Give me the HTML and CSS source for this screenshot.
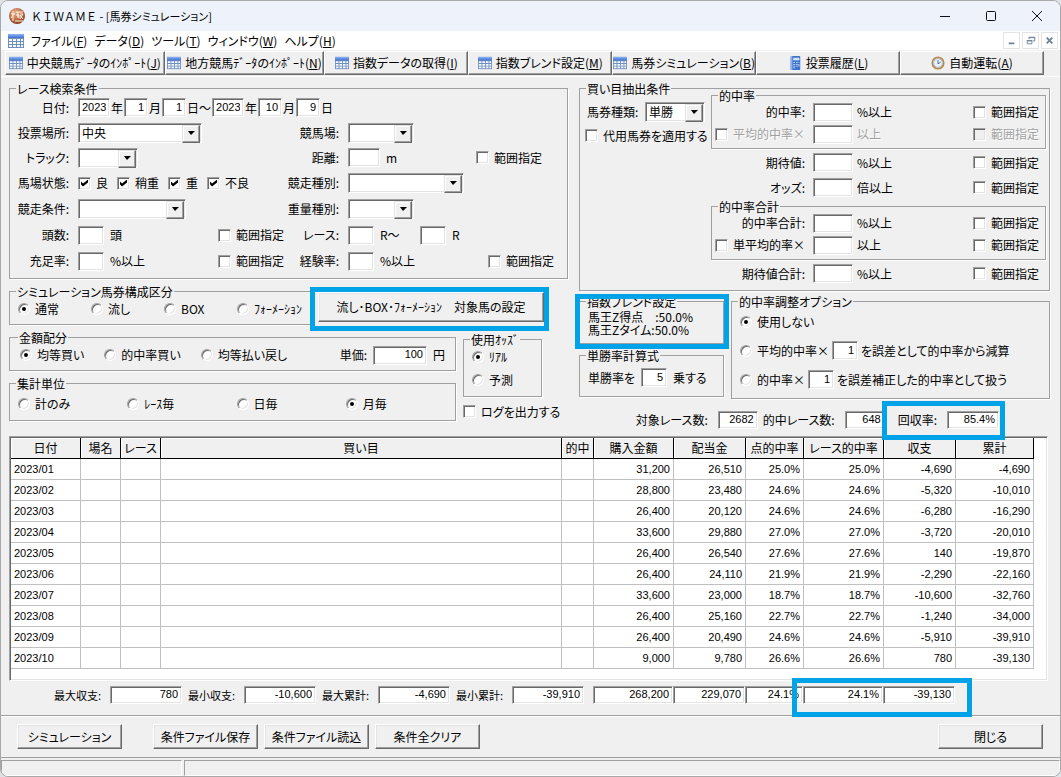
FILE: index.html
```html
<!DOCTYPE html>
<html lang="ja">
<head>
    <meta charset="UTF-8">
    <meta name="viewport" content="width=device-width, initial-scale=1.0">
    <title>KIWAME - [馬券シミュレーション]</title>
    <link rel="stylesheet" href="styles.css">
</head>
<body>
<svg class="defs" width="0" height="0" aria-hidden="true">
    <linearGradient id="gridHead" x1="0" y1="0" x2="0" y2="1">
        <stop offset="0" stop-color="#8fb4f4"/>
        <stop offset="1" stop-color="#3f6fd0"/>
    </linearGradient>
    <symbol id="icon-grid" viewBox="0 0 16 16">
        <rect x="0" y="1" width="16" height="14" fill="#6f8fc0"/>
        <rect x="0" y="1" width="16" height="4" fill="url(#gridHead)"/>
        <path fill="#f4f8ff" d="M1 6h3v2H1zM5 6h3v2H5zM9 6h3v2H9zM13 6h2v2h-2zM1 9h3v2H1zM5 9h3v2H5zM9 9h3v2H9zM13 9h2v2h-2zM1 12h3v2H1zM5 12h3v2H5zM9 12h3v2H9zM13 12h2v2h-2z"/>
    </symbol>
</svg>
<div class="window">
    <header class="titlebar">
        <svg class="app-icon" viewBox="0 0 16 16">
            <radialGradient id="ball" cx=".4" cy=".3" r=".8">
                <stop offset="0" stop-color="#e9b08a"/>
                <stop offset=".6" stop-color="#b5653a"/>
                <stop offset="1" stop-color="#6d3014"/>
            </radialGradient>
            <circle cx="8" cy="8" r="8" fill="url(#ball)"/>
            <path fill="none" stroke="#fff3e8" stroke-width="1" d="M2 6h4M4 3v10M4 7l-2 3M7 4h7M9 4v6M7 7h3v3M11 6h3l-3 5M11 7l3 4M6 13h8"/>
        </svg>
        <h1><span class="wide">ＫＩＷＡＭＥ</span> - [馬券シミュレーション]</h1>
        <div class="win-buttons">
            <button aria-label="最小化"><svg viewBox="0 0 12 12"><path d="M1 6.5h10"/></svg></button>
            <button aria-label="最大化"><svg viewBox="0 0 12 12"><rect x="1.5" y="1.5" width="9" height="9" rx="1"/></svg></button>
            <button aria-label="終了"><svg viewBox="0 0 12 12"><path d="M1 1l10 10M11 1L1 11"/></svg></button>
        </div>
    </header>

    <nav class="menubar">
        <svg class="menu-icon"><use href="#icon-grid"/></svg>
        <a href="#">ファイル(<u>F</u>)</a>
        <a href="#">データ(<u>D</u>)</a>
        <a href="#">ツール(<u>T</u>)</a>
        <a href="#">ウィンドウ(<u>W</u>)</a>
        <a href="#">ヘルプ(<u>H</u>)</a>
        <div class="mdi-buttons">
            <button aria-label="子画面を最小化"><svg viewBox="0 0 16 16"><path d="M5 11h6" stroke-width="2"/></svg></button>
            <button aria-label="子画面を元に戻す"><svg viewBox="0 0 16 16"><path d="M6.5 6.5v-2h6v4h-2M6 5h7M4.5 8.500h5v3h-5zM4 8h6"/></svg></button>
            <button aria-label="子画面を閉じる"><svg viewBox="0 0 16 16"><path d="M5 5l6 6M11 5l-6 6" stroke-width="2"/></svg></button>
        </div>
    </nav>

    <div class="toolbar">
        <button class="long"><svg><use href="#icon-grid"/></svg><span>中央競馬ﾃﾞｰﾀのｲﾝﾎﾟｰﾄ(<u>J</u>)</span></button>
        <button class="long"><svg><use href="#icon-grid"/></svg><span>地方競馬ﾃﾞｰﾀのｲﾝﾎﾟｰﾄ(<u>N</u>)</span></button>
        <button><svg><use href="#icon-grid"/></svg><span>指数データの取得(<u>I</u>)</span></button>
        <button><svg><use href="#icon-grid"/></svg><span>指数ブレンド設定(<u>M</u>)</span></button>
        <button><svg><use href="#icon-grid"/></svg><span>馬券シミュレーション(<u>B</u>)</span></button>
        <button>
            <svg viewBox="0 0 16 16">
                <rect x="3" y="0" width="11" height="16" rx="1" fill="#3d74c9"/>
                <rect x="3" y="0" width="2" height="16" fill="#8db4ea"/>
                <rect x="6" y="2" width="7" height="3" fill="#cfe3fb"/>
                <path fill="#dbe9fb" d="M6 7h2v1H6zM9 7h2v1H9zM6 9h2v1H6zM9 9h2v1H9zM6 11h2v1H6zM9 11h2v1H9zM12 7h1v1h-1zM12 9h1v3h-1zM6 13h2v1H6z"/>
            </svg>
            <span>投票履歴(<u>L</u>)</span>
        </button>
        <button>
            <svg viewBox="0 0 16 16">
                <circle cx="8" cy="8" r="6.500" fill="#e9f2fc" stroke="#b98a4a" stroke-width="2"/>
                <circle cx="8" cy="8" r="5" fill="none" stroke="#9fb6d4"/>
                <path d="M8 4.500V9l3-2" fill="none" stroke="#3c5f94"/>
            </svg>
            <span>自動運転(<u>A</u>)</span>
        </button>
    </div>

    <main>
        <div class="conditions">
            <div class="left">
                <fieldset class="search">
                    <legend>レース検索条件</legend>
                    <label for="fromYear">日付:</label>
                    <div class="cell dates">
                        <input type="text" id="fromYear" class="w32" value="2023">年
                        <input type="text" class="w24" value="1" aria-label="開始月">月
                        <input type="text" class="w24" value="1" aria-label="開始日">日～
                        <input type="text" class="w32" value="2023" aria-label="終了年">年
                        <input type="text" class="w24" value="10" aria-label="終了月">月
                        <input type="text" class="w24" value="9" aria-label="終了日">日
                    </div>

                    <label for="place">投票場所:</label>
                    <div class="cell"><span class="combo w124"><select id="place"><option>中央</option></select></span></div>
                    <label for="course">競馬場:</label>
                    <div class="cell"><span class="combo w66"><select id="course"><option></option></select></span></div>

                    <label for="track">トラック:</label>
                    <div class="cell"><span class="combo w60"><select id="track"><option></option></select></span></div>
                    <label for="distance">距離:</label>
                    <div class="cell">
                        <input type="text" id="distance" class="w32"><span class="unit">m</span>
                        <label class="check range inner"><input type="checkbox">範囲指定</label>
                    </div>

                    <span class="caption">馬場状態:</span>
                    <div class="cell going">
                        <label class="check"><input type="checkbox" checked>良</label>
                        <label class="check"><input type="checkbox" checked>稍重</label>
                        <label class="check"><input type="checkbox" checked>重</label>
                        <label class="check"><input type="checkbox" checked>不良</label>
                    </div>
                    <label for="raceType">競走種別:</label>
                    <div class="cell"><span class="combo w116"><select id="raceType"><option></option></select></span></div>

                    <label for="raceCond">競走条件:</label>
                    <div class="cell"><span class="combo w108"><select id="raceCond"><option></option></select></span></div>
                    <label for="weightType">重量種別:</label>
                    <div class="cell"><span class="combo w66"><select id="weightType"><option></option></select></span></div>

                    <label for="heads">頭数:</label>
                    <div class="cell">
                        <input type="text" id="heads" class="w26"><span class="unit">頭</span>
                        <label class="check range"><input type="checkbox">範囲指定</label>
                    </div>
                    <label for="raceFrom">レース:</label>
                    <div class="cell">
                        <input type="text" id="raceFrom" class="w26"><span class="unit to">R～</span>
                        <input type="text" class="w26" aria-label="レース終了"><span class="unit">R</span>
                    </div>

                    <label for="fill">充足率:</label>
                    <div class="cell">
                        <input type="text" id="fill" class="w26"><span class="unit">%以上</span>
                        <label class="check range"><input type="checkbox">範囲指定</label>
                    </div>
                    <label for="exp">経験率:</label>
                    <div class="cell">
                        <input type="text" id="exp" class="w26"><span class="unit">%以上</span>
                        <label class="check range"><input type="checkbox">範囲指定</label>
                    </div>
                </fieldset>

                <div class="kind-row">
                    <fieldset class="kind">
                        <legend>シミュレーション馬券構成区分</legend>
                        <label class="radio"><input type="radio" name="kind" checked>通常</label>
                        <label class="radio"><input type="radio" name="kind">流し</label>
                        <label class="radio"><input type="radio" name="kind">BOX</label>
                        <label class="radio"><input type="radio" name="kind">ﾌｫｰﾒｰｼｮﾝ</label>
                    </fieldset>
                    <div class="marked mark-target">
                        <button class="btn">流し･BOX･ﾌｫｰﾒｰｼｮﾝ　対象馬の設定</button>
                    </div>
                </div>

                <div class="money-row">
                    <div class="money-left">
                        <fieldset class="money">
                            <legend>金額配分</legend>
                            <label class="radio"><input type="radio" name="alloc" checked>均等買い</label>
                            <label class="radio"><input type="radio" name="alloc">的中率買い</label>
                            <label class="radio"><input type="radio" name="alloc">均等払い戻し</label>
                            <label for="unitPrice" class="price">単価:</label>
                            <input type="text" id="unitPrice" class="w54" value="100">
                            <span>円</span>
                        </fieldset>
                        <fieldset class="total-unit">
                            <legend>集計単位</legend>
                            <label class="radio"><input type="radio" name="unit">計のみ</label>
                            <label class="radio"><input type="radio" name="unit">ﾚｰｽ毎</label>
                            <label class="radio"><input type="radio" name="unit">日毎</label>
                            <label class="radio"><input type="radio" name="unit" checked>月毎</label>
                        </fieldset>
                    </div>
                    <div class="money-right">
                        <fieldset class="odds">
                            <legend>使用ｵｯｽﾞ</legend>
                            <label class="radio"><input type="radio" name="odds" checked>ﾘｱﾙ</label>
                            <label class="radio"><input type="radio" name="odds">予測</label>
                        </fieldset>
                        <label class="check log"><input type="checkbox">ログを出力する</label>
                    </div>
                </div>
            </div>

            <div class="right">
                <fieldset class="extract">
                    <legend>買い目抽出条件</legend>
                    <div class="ticket">
                        <div class="ticket-type">
                            <label for="ticket">馬券種類:</label>
                            <span class="combo w60"><select id="ticket"><option>単勝</option></select></span>
                        </div>
                        <label class="check"><input type="checkbox">代用馬券を適用する</label>
                    </div>
                    <div class="limits">
                        <fieldset class="limit-group">
                            <legend>的中率</legend>
                            <div class="limit">
                                <label for="hit">的中率:</label><input type="text" id="hit"><span>%以上</span>
                                <label class="check"><input type="checkbox">範囲指定</label>
                            </div>
                            <div class="limit off">
                                <label class="check"><input type="checkbox">平均的中率×</label><input type="text" aria-label="平均的中率"><span>以上</span>
                                <label class="check"><input type="checkbox" disabled>範囲指定</label>
                            </div>
                        </fieldset>
                        <div class="limit-plain">
                            <div class="limit">
                                <label for="expect">期待値:</label><input type="text" id="expect"><span>%以上</span>
                                <label class="check"><input type="checkbox">範囲指定</label>
                            </div>
                            <div class="limit">
                                <label for="oddsMin">オッズ:</label><input type="text" id="oddsMin"><span>倍以上</span>
                                <label class="check"><input type="checkbox">範囲指定</label>
                            </div>
                        </div>
                        <fieldset class="limit-group">
                            <legend>的中率合計</legend>
                            <div class="limit">
                                <label for="hitSum">的中率合計:</label><input type="text" id="hitSum"><span>%以上</span>
                                <label class="check"><input type="checkbox">範囲指定</label>
                            </div>
                            <div class="limit">
                                <label class="check"><input type="checkbox">単平均的率×</label><input type="text" aria-label="単平均的率"><span>以上</span>
                                <label class="check"><input type="checkbox">範囲指定</label>
                            </div>
                        </fieldset>
                        <div class="limit-plain">
                            <div class="limit">
                                <label for="expectSum">期待値合計:</label><input type="text" id="expectSum"><span>%以上</span>
                                <label class="check"><input type="checkbox">範囲指定</label>
                            </div>
                        </div>
                    </div>
                </fieldset>

                <div class="option-row">
                    <div class="option-left">
                        <div class="marked mark-blend">
                            <fieldset class="blend">
                                <legend>指数ブレンド設定</legend>
                                <p>馬王Z得点　:50.0%</p>
                                <p>馬王Zタイム:50.0%</p>
                            </fieldset>
                        </div>
                        <fieldset class="power">
                            <legend>単勝率計算式</legend>
                            <label for="power">単勝率を</label>
                            <input type="text" id="power" class="w26" value="5">
                            <span>乗する</span>
                        </fieldset>
                    </div>
                    <fieldset class="adjust">
                        <legend>的中率調整オプション</legend>
                        <div><label class="radio"><input type="radio" name="adj" checked>使用しない</label></div>
                        <div><label class="radio"><input type="radio" name="adj">平均的中率×</label><input type="text" class="w26" value="1" aria-label="誤差">を誤差として的中率から減算</div>
                        <div><label class="radio"><input type="radio" name="adj">的中率×</label><input type="text" class="w26" value="1" aria-label="誤差補正">を誤差補正した的中率として扱う</div>
                    </fieldset>
                </div>

                <div class="counts">
                    <label for="races">対象レース数:</label><input type="text" id="races" class="w40" value="2682" readonly>
                    <label for="hits" class="hits">的中レース数:</label><input type="text" id="hits" class="w40" value="648" readonly>
                    <div class="marked mark-rate">
                        <label for="rate">回収率:</label><input type="text" id="rate" class="w52" value="85.4%" readonly>
                    </div>
                </div>
            </div>
        </div>

        <div class="grid-box">
            <table>
                <colgroup>
                    <col class="c70"><col class="c40"><col class="c40"><col><col class="c32">
                    <col class="c80"><col class="c72"><col class="c58"><col class="c80"><col class="c72"><col class="c78">
                </colgroup>
                <thead>
                    <tr><th>日付</th><th>場名</th><th>レース</th><th>買い目</th><th>的中</th><th>購入金額</th><th>配当金</th><th>点的中率</th><th>レース的中率</th><th>収支</th><th>累計</th></tr>
                </thead>
                <tbody>
                    <tr><td>2023/01</td><td></td><td></td><td></td><td></td><td>31,200</td><td>26,510</td><td>25.0%</td><td>25.0%</td><td>-4,690</td><td>-4,690</td></tr>
                    <tr><td>2023/02</td><td></td><td></td><td></td><td></td><td>28,800</td><td>23,480</td><td>24.6%</td><td>24.6%</td><td>-5,320</td><td>-10,010</td></tr>
                    <tr><td>2023/03</td><td></td><td></td><td></td><td></td><td>26,400</td><td>20,120</td><td>24.6%</td><td>24.6%</td><td>-6,280</td><td>-16,290</td></tr>
                    <tr><td>2023/04</td><td></td><td></td><td></td><td></td><td>33,600</td><td>29,880</td><td>27.0%</td><td>27.0%</td><td>-3,720</td><td>-20,010</td></tr>
                    <tr><td>2023/05</td><td></td><td></td><td></td><td></td><td>26,400</td><td>26,540</td><td>27.6%</td><td>27.6%</td><td>140</td><td>-19,870</td></tr>
                    <tr><td>2023/06</td><td></td><td></td><td></td><td></td><td>26,400</td><td>24,110</td><td>21.9%</td><td>21.9%</td><td>-2,290</td><td>-22,160</td></tr>
                    <tr><td>2023/07</td><td></td><td></td><td></td><td></td><td>33,600</td><td>23,000</td><td>18.7%</td><td>18.7%</td><td>-10,600</td><td>-32,760</td></tr>
                    <tr><td>2023/08</td><td></td><td></td><td></td><td></td><td>26,400</td><td>25,160</td><td>22.7%</td><td>22.7%</td><td>-1,240</td><td>-34,000</td></tr>
                    <tr><td>2023/09</td><td></td><td></td><td></td><td></td><td>26,400</td><td>20,490</td><td>24.6%</td><td>24.6%</td><td>-5,910</td><td>-39,910</td></tr>
                    <tr><td>2023/10</td><td></td><td></td><td></td><td></td><td>9,000</td><td>9,780</td><td>26.6%</td><td>26.6%</td><td>780</td><td>-39,130</td></tr>
                </tbody>
            </table>
        </div>

        <div class="summary">
            <div class="extremes">
                <label for="maxBal">最大収支:</label><input type="text" id="maxBal" value="780" readonly>
                <label for="minBal">最小収支:</label><input type="text" id="minBal" value="-10,600" readonly>
                <label for="maxSum">最大累計:</label><input type="text" id="maxSum" value="-4,690" readonly>
                <label for="minSum">最小累計:</label><input type="text" id="minSum" value="-39,910" readonly>
            </div>
            <div class="totals">
                <input type="text" class="c80" value="268,200" aria-label="購入金額合計" readonly>
                <input type="text" class="c72" value="229,070" aria-label="配当金合計" readonly>
                <input type="text" class="c58" value="24.1%" aria-label="点的中率" readonly>
                <div class="marked mark-total">
                    <input type="text" class="c80" value="24.1%" aria-label="レース的中率" readonly>
                    <input type="text" class="c72" value="-39,130" aria-label="収支合計" readonly>
                </div>
            </div>
        </div>
    </main>

    <div class="actions">
        <button class="btn first">シミュレーション</button>
        <button class="btn">条件ファイル保存</button>
        <button class="btn">条件ファイル読込</button>
        <button class="btn">条件全クリア</button>
        <button class="btn close">閉じる</button>
    </div>
    <footer class="statusbar"><div class="pane-small"></div><div class="pane"></div></footer>
</div>
</body>
</html>
```
FILE: styles.css
```css
* {
    box-sizing: border-box;
}
body {
    margin: 0;
    background: #dfe3e8;
    color: #000;
    font: 12px/12px "Noto Sans CJK JP", sans-serif;
    font-feature-settings: "palt";
}
button, input, select {
    margin: 0;
    padding: 0;
    border-radius: 0;
    font: inherit;
    font-feature-settings: inherit;
    color: inherit;
}
p {
    margin: 0;
}
.defs {
    position: absolute;
}
.window {
    display: flex;
    flex-direction: column;
    min-width: 1061px;
    min-height: 100vh;
    background: #f0f0f0;
    border: 1px solid #a8a8a8;
    border-radius: 8px;
    overflow: hidden;
}

/* title bar */
.titlebar {
    display: flex;
    align-items: center;
    height: 30px;
    padding: 0 8px;
    background: #eef3fb;
}
.app-icon {
    width: 16px;
    height: 16px;
    margin-right: 6px;
}
.titlebar h1 {
    margin: 0;
    font-size: 11px;
    font-weight: normal;
}
.wide {
    font-feature-settings: normal;
}
.win-buttons {
    display: flex;
    gap: 34px;
    margin-left: auto;
    padding-right: 9px;
}
.win-buttons button {
    width: 12px;
    height: 12px;
    border: 0;
    background: none;
}
.win-buttons svg {
    display: block;
    fill: none;
    stroke: #111;
}

/* menu */
.menubar {
    display: flex;
    align-items: center;
    gap: 7px;
    height: 19px;
    padding: 0 2px 0 7px;
    background: #fff;
}
.menubar a {
    color: #000;
    text-decoration: none;
}
.menu-icon {
    width: 16px;
    height: 16px;
}
.mdi-buttons {
    display: flex;
    gap: 2px;
    margin-left: auto;
}
.mdi-buttons button {
    width: 17px;
    height: 17px;
    background: #fff;
    border: 1px solid #e4e4e4;
}
.mdi-buttons svg {
    display: block;
    fill: none;
    stroke: #6f8296;
}

/* toolbar */
.toolbar {
    display: flex;
    height: 27px;
    padding: 1px 16px 1px 4px;
    border-bottom: 1px solid #fff;
}
.toolbar button {
    flex: 144 1 0;
    display: flex;
    align-items: center;
    justify-content: center;
    gap: 4px;
    min-width: 0;
    white-space: nowrap;
    background: #f0f0f0;
    border: 1px solid;
    border-color: #fff #696969 #696969 #fff;
    box-shadow: inset -1px -1px 0 #a0a0a0;
}
.toolbar .long {
    flex-grow: 160;
}
.toolbar svg {
    flex: none;
    width: 14px;
    height: 14px;
}

/* common parts */
fieldset {
    min-width: 0;
    margin: 0;
    padding: 0;
    border: 1px solid #a0a0a0;
    box-shadow: 1px 1px 0 #fff;
}
legend {
    margin-left: 6px;
    padding: 0 1px;
    line-height: 11px;
    white-space: nowrap;
}
label, span, .cell {
    white-space: nowrap;
}
input[type="text"] {
    flex: none;
    height: 19px;
    padding: 0 3px 2px;
    font: 11px "Liberation Sans", sans-serif;
    text-align: right;
    background: #fff;
}
input[type="text"], select, .grid-box {
    border: 1px solid;
    border-color: #a0a0a0 #fff #fff #a0a0a0;
    box-shadow: inset 1px 1px 0 #696969, inset -1px -1px 0 #e3e3e3;
    outline: none;
}
.combo {
    position: relative;
    display: block;
}
.combo select {
    display: block;
    width: 100%;
    height: 20px;
    padding-left: 3px;
    appearance: none;
    background: #fff;
}
.combo::after {
    content: "";
    position: absolute;
    top: 2px;
    right: 2px;
    width: 16px;
    height: 16px;
    background: #f0f0f0;
    border: 1px solid;
    border-color: #e3e3e3 #696969 #696969 #e3e3e3;
    box-shadow: inset -1px -1px 0 #a0a0a0, inset 1px 1px 0 #fff;
    pointer-events: none;
}
.combo::before {
    content: "";
    position: absolute;
    z-index: 1;
    top: 8px;
    right: 7px;
    border: 4px solid transparent;
    border-top-color: #000;
    border-bottom: 0;
    border-width: 4px 4px 0 3px;
    pointer-events: none;
}
.check, .radio {
    display: flex;
    align-items: center;
    gap: 5px;
}
.check input, .radio input {
    flex: none;
    display: grid;
    place-items: center;
    width: 13px;
    height: 13px;
    appearance: none;
    background: #fff;
    border: 1px solid;
    border-color: #a0a0a0 #fff #fff #a0a0a0;
    box-shadow: inset 1px 1px 0 #696969, inset -1px -1px 0 #e3e3e3;
}
.check input:disabled {
    background: #f0f0f0;
}
.check input:checked::before {
    content: "";
    width: 7px;
    height: 7px;
    background: #000;
    clip-path: polygon(0 29%, 29% 57%, 100% 0, 100% 43%, 29% 100%, 0 71%);
}
.radio input {
    width: 12px;
    height: 12px;
    border-radius: 50%;
}
.radio input:checked::before {
    content: "";
    width: 4px;
    height: 4px;
    border-radius: 50%;
    background: #000;
}
.btn {
    height: 25px;
    background: #f0f0f0;
    border: 1px solid;
    border-color: #fff #696969 #696969 #fff;
    box-shadow: inset -1px -1px 0 #a0a0a0, inset 1px 1px 0 #e3e3e3;
    white-space: nowrap;
}
.marked {
    position: relative;
}
.marked::after {
    content: "";
    position: absolute;
    border: 5px solid #00a2e8;
    pointer-events: none;
}
.w24 { width: 24px; }
.w26 { width: 26px; }
.w32 { width: 32px; }
.w40 { width: 40px; }
.w52 { width: 52px; }
.w54 { width: 54px; }
.w60 { width: 60px; }
.w66 { width: 66px; }
.w108 { width: 108px; }
.w116 { width: 116px; }
.w124 { width: 124px; }
.c32 { width: 32px; }
.c40 { width: 40px; }
.c58 { width: 58px; }
.c70 { width: 70px; }
.c72 { width: 72px; }
.c78 { width: 78px; }
.c80 { width: 80px; }

/* conditions */
main {
    padding: 6px 10px 0 8px;
}
.conditions {
    display: grid;
    grid-template-columns: 559fr 471fr;
    gap: 11px;
}
.search {
    display: grid;
    grid-template-columns: 68px 206px 64px 1fr;
    grid-template-rows: repeat(3, 25px) repeat(4, 26px);
    align-items: center;
    padding: 1px 13px 4px 0;
}
.search > label, .caption {
    padding-right: 9px;
    text-align: right;
}
.cell {
    display: flex;
    align-items: center;
}
.dates {
    grid-column: 2 / -1;
    gap: 1px;
}
.unit {
    margin-left: 6px;
}
.to {
    width: 40px;
}
.range {
    margin-left: auto;
}
.range.inner {
    margin-right: 12px;
}
.going {
    gap: 9px;
}
.kind-row {
    display: flex;
    gap: 5px;
    margin-top: 7px;
}
.kind {
    display: grid;
    grid-template-columns: repeat(4, 73px);
    align-items: center;
    width: 304px;
    height: 39px;
    padding: 0 0 3px 8px;
}
.mark-target {
    padding-top: 6px;
}
.mark-target .btn {
    width: 226px;
    height: 30px;
}
.mark-target::after {
    inset: 1px -5px -6px -8px;
}
.money-row {
    display: flex;
    gap: 7px;
    margin-top: 7px;
}
.money-left {
    width: 447px;
}
.money {
    display: flex;
    align-items: center;
    gap: 20px;
    height: 39px;
    padding: 0 10px 3px;
}
.price {
    margin: 0 -14px 0 auto;
}
.money > span {
    margin-left: -14px;
}
.total-unit {
    display: grid;
    grid-template-columns: repeat(4, 1fr);
    align-items: center;
    height: 43px;
    margin-top: 7px;
    padding: 0 0 2px 8px;
}
.odds {
    width: 79px;
    height: 63px;
    margin-top: 2px;
    padding-left: 8px;
}
.odds .radio {
    height: 23px;
}
.kind legend, .money legend, .total-unit legend, .odds legend,
.blend legend, .power legend, .adjust legend {
    margin-left: -2px;
}
.log {
    margin-top: 8px;
}

.extract {
    display: grid;
    grid-template-columns: 131px 1fr;
    padding: 0 3px 3px 0;
}
.ticket {
    padding: 6px 0 0 5px;
}
.ticket-type {
    display: flex;
    align-items: center;
    justify-content: space-between;
    height: 23px;
    padding: 0 6px 0 2px;
    margin-bottom: 6px;
}
.limits {
    margin-top: -4px;
}
.limit-group {
    padding-bottom: 3px;
}
.limit-plain {
    padding: 1px;
}
.limit {
    display: grid;
    grid-template-columns: 101px 40px 1fr auto;
    align-items: center;
    height: 22px;
    padding-right: 6px;
}
.limit-plain .limit {
    height: 25px;
}
.limit > label:first-child {
    padding-right: 8px;
    text-align: right;
    justify-content: flex-end;
}
.limit > span {
    padding-left: 4px;
}
.off label, .off span {
    color: #a0a0a0;
    text-shadow: 1px 1px 0 #fff;
}

.option-row {
    display: grid;
    grid-template-columns: 145px 1fr;
    gap: 7px;
    margin-top: 5px;
}
.blend {
    height: 48px;
    padding: 3px 0 0 8px;
    line-height: 13px;
}
.mark-blend::after {
    inset: -2px -5px -5px -4px;
}
.power {
    display: flex;
    align-items: center;
    gap: 6px;
    height: 47px;
    margin-top: 6px;
    padding: 0 0 2px 8px;
}
.adjust {
    padding: 0 0 4px 8px;
}
.adjust div {
    display: flex;
    align-items: center;
    gap: 3px;
    height: 29px;
    white-space: nowrap;
}
.counts {
    display: flex;
    align-items: center;
    justify-content: flex-end;
    height: 32px;
    margin-top: 5px;
    padding-right: 51px;
}
.counts label {
    padding-right: 10px;
}
.hits {
    padding-left: 5px;
}
.counts input, .summary input {
    height: 18px;
}
.mark-rate {
    display: flex;
    align-items: center;
    margin-left: 13px;
}
.mark-rate::after {
    inset: -10px -6px -11px -16px;
}

/* result table */
.grid-box {
    margin-right: 2px;
    padding: 1px 13px 11px 1px;
    background: #fff;
}
table {
    width: 100%;
    table-layout: fixed;
    border-collapse: separate;
    border-spacing: 0;
}
th, td {
    height: 21px;
    padding: 0 3px;
    white-space: nowrap;
}
th {
    padding: 0;
    font-weight: normal;
    background: #f0f0f0;
    border-right: 1px solid #000;
    border-bottom: 1px solid #000;
    box-shadow: inset 1px 1px 0 #fff;
}
td {
    font: 11px "Liberation Sans", sans-serif;
    text-align: right;
    border-right: 1px solid #c0c0c0;
    border-bottom: 1px solid #c0c0c0;
}
td:first-child {
    text-align: left;
}
.summary {
    display: flex;
    justify-content: space-between;
    margin-top: 5px;
    padding: 0 95px 0 45px;
}
.extremes, .totals, .mark-total {
    display: flex;
    align-items: center;
}
.extremes {
    font-size: 11px;
}
.extremes label {
    width: 56px;
}
.extremes input {
    width: 72px;
    margin-right: 6px;
}
.mark-total::after {
    inset: -8px -17px -13px -11px;
}

/* bottom */
.actions {
    display: flex;
    gap: 6px;
    margin-top: 11px;
    padding: 8px 17px 8px 16px;
    border-top: 1px solid #a0a0a0;
    box-shadow: inset 0 1px 0 #fff;
}
.actions .btn {
    width: 105px;
}
.actions .first {
    margin-right: 25px;
}
.actions .close {
    margin-left: auto;
}
.statusbar {
    display: flex;
    gap: 2px;
    flex: 1;
    min-height: 19px;
    padding-top: 2px;
    border-top: 1px solid #a0a0a0;
}
.statusbar div {
    border: 1px solid;
    border-color: #a0a0a0 #fff #fff #a0a0a0;
}
.pane-small {
    width: 181px;
}
.pane {
    flex: 1;
}
```
